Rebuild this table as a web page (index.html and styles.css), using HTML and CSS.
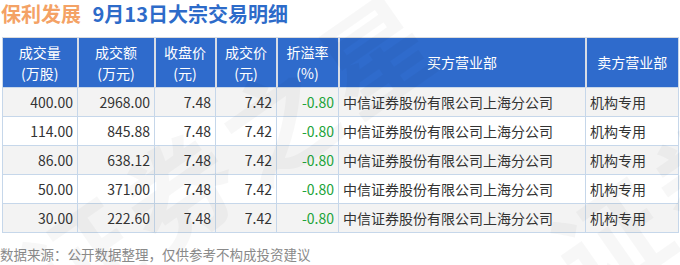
FILE: index.html
```html
<!DOCTYPE html>
<html lang="zh-CN">
<head>
    <meta charset="UTF-8">
    <title>保利发展 9月13日大宗交易明细</title>
    <link rel="stylesheet" href="styles.css">
</head>
<body>
    <div class="page">
        <h1 class="title">
            <span class="stock">保利发展</span>
            <span class="subject">9月13日大宗交易明细</span>
        </h1>

        <table class="trades">
            <thead>
                <tr>
                    <th class="c-vol">成交量<br>(万股)</th>
                    <th class="c-amt">成交额<br>(万元)</th>
                    <th class="c-close">收盘价<br>(元)</th>
                    <th class="c-price">成交价<br>(元)</th>
                    <th class="c-rate">折溢率<br>(%)</th>
                    <th class="c-buy">买方营业部</th>
                    <th class="c-sell">卖方营业部</th>
                </tr>
            </thead>
            <tbody>
                <tr>
                    <td>400.00</td><td>2968.00</td><td>7.48</td><td>7.42</td><td class="down">-0.80</td>
                    <td class="name">中信证券股份有限公司上海分公司</td><td class="name">机构专用</td>
                </tr>
                <tr>
                    <td>114.00</td><td>845.88</td><td>7.48</td><td>7.42</td><td class="down">-0.80</td>
                    <td class="name">中信证券股份有限公司上海分公司</td><td class="name">机构专用</td>
                </tr>
                <tr>
                    <td>86.00</td><td>638.12</td><td>7.48</td><td>7.42</td><td class="down">-0.80</td>
                    <td class="name">中信证券股份有限公司上海分公司</td><td class="name">机构专用</td>
                </tr>
                <tr>
                    <td>50.00</td><td>371.00</td><td>7.48</td><td>7.42</td><td class="down">-0.80</td>
                    <td class="name">中信证券股份有限公司上海分公司</td><td class="name">机构专用</td>
                </tr>
                <tr>
                    <td>30.00</td><td>222.60</td><td>7.48</td><td>7.42</td><td class="down">-0.80</td>
                    <td class="name">中信证券股份有限公司上海分公司</td><td class="name">机构专用</td>
                </tr>
            </tbody>
        </table>

        <p class="source">数据来源：公开数据整理，仅供参考不构成投资建议</p>

        <div class="watermark wm-1">证券之星</div>
        <div class="watermark wm-2">证券之星</div>
    </div>
</body>
</html>
```

FILE: styles.css
```css
* {
    margin: 0;
    padding: 0;
    box-sizing: border-box;
}

body {
    font-family: "Noto Sans CJK SC", "Noto Sans", sans-serif;
    background: #fff;
    color: #333;
    width: 680px;
    height: 265px;
    overflow: hidden;
}

.page {
    position: relative;
    height: 265px;
    overflow: hidden;
}

.title {
    font-size: 20px;
    font-weight: bold;
    line-height: 26px;
    height: 37px;
    padding: 1px 0 0 1px;
}

.title .stock {
    color: #f4a265;
    margin-right: 7px;
}

.title .subject {
    color: #2d6bc9;
}

.trades {
    width: 676px;
    margin-left: 2px;
    border-collapse: collapse;
    table-layout: fixed;
    font-size: 14px;
    border-top: 1px solid #dcdcdc;
}

.trades th {
    background: #2f6bcc;
    color: #fff;
    font-weight: normal;
    height: 50px;
    line-height: 21px;
    text-align: center;
    border-left: 2px solid #d8dde6;
    border-bottom: 1px solid #c9d8ea;
}

.trades th:first-child {
    border-left: 1px solid #c9d8ea;
}

.trades th:last-child {
    border-right: 1px solid #c9d8ea;
}

.c-vol { width: 75px; }
.c-amt { width: 77px; }
.c-close { width: 61px; }
.c-price { width: 61px; }
.c-rate { width: 62px; }
.c-buy { width: 247px; }
.c-sell { width: 93px; }

.trades td {
    height: 29px;
    padding: 0 4px;
    text-align: right;
    color: #333;
    border: 1px solid #c6d7ea;
    white-space: nowrap;
}

.trades tbody tr:nth-child(odd) td {
    background: #f3f3f3;
}

.trades td.name {
    text-align: left;
    padding-left: 4px;
}

.trades td.down {
    color: #21a33a;
}

.source {
    margin-top: 12px;
    font-size: 13.5px;
    color: #8a8a8a;
    line-height: 18px;
}

.watermark {
    position: absolute;
    font-size: 110px;
    font-weight: bold;
    color: rgba(0, 0, 0, 0.03);
    white-space: nowrap;
    transform: rotate(-35deg);
    pointer-events: none;
    letter-spacing: 10px;
}

.wm-1 {
    left: -10px;
    top: 70px;
}

.wm-2 {
    left: 520px;
    top: 50px;
}
```
